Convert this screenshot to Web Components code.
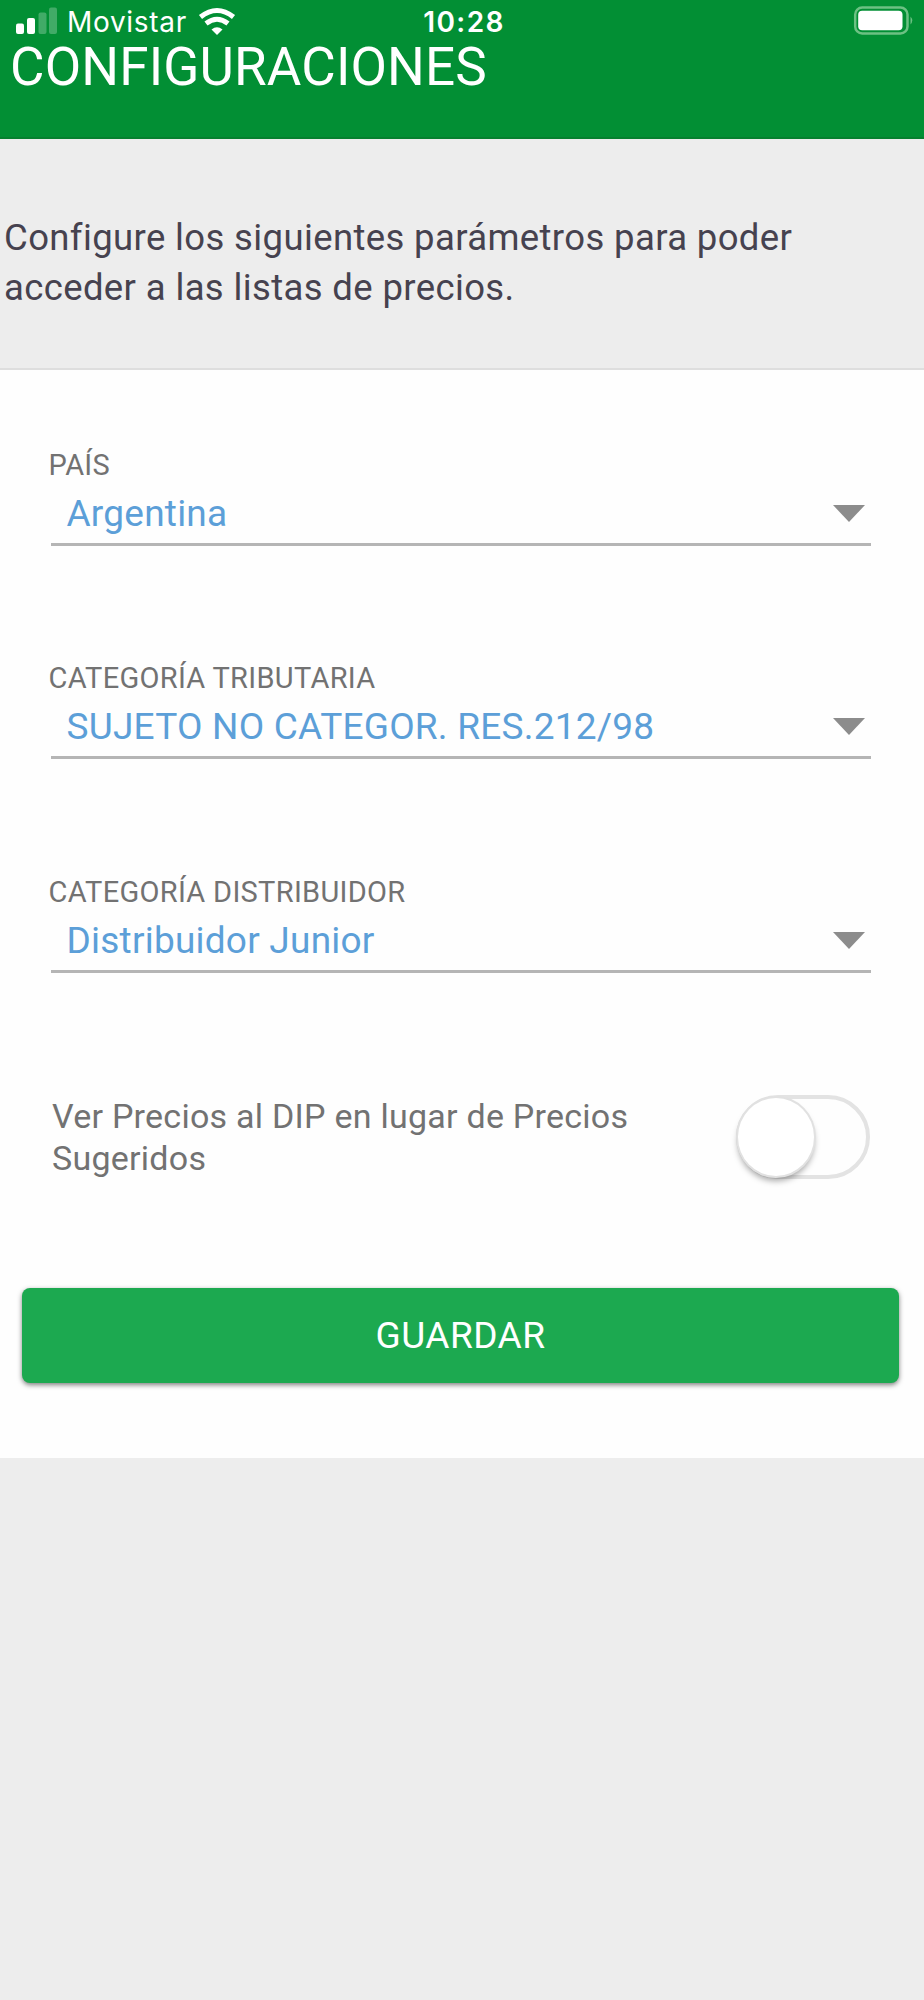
<!DOCTYPE html>
<html lang="es">
<head>
<meta charset="UTF-8">
<title>Configuraciones</title>
<style>
    html, body {
        margin: 0;
        background: #ededed;
    }

    body {
        font-family: Roboto, "Liberation Sans", sans-serif;
    }
</style>
</head>
<body>
<settings-page>
    <app-header slot="header" heading="CONFIGURACIONES">
        <status-bar carrier="Movistar" time="10:28"></status-bar>
    </app-header>
    <intro-text slot="intro">Configure los siguientes parámetros para poder<br>acceder a las listas de precios.</intro-text>
    <select-field label="PAÍS" value="Argentina"></select-field>
    <select-field label="CATEGORÍA TRIBUTARIA" value="SUJETO NO CATEGOR. RES.212/98"></select-field>
    <select-field label="CATEGORÍA DISTRIBUIDOR" value="Distribuidor Junior"></select-field>
    <toggle-field>Ver Precios al DIP en lugar de Precios Sugeridos</toggle-field>
    <save-button>GUARDAR</save-button>
</settings-page>

<script>
class SettingsPage extends HTMLElement {
    connectedCallback() {
        this.attachShadow({ mode: 'open' });
        this.shadowRoot.innerHTML = `
            <style>
                :host {
                    display: flex;
                    flex-direction: column;
                    width: 924px;
                    height: 2000px;
                    overflow: hidden;
                    background: #ededed;
                }

                main {
                    box-sizing: border-box;
                    height: 1088px;
                    padding-top: 72px;
                    background: #fefefe;
                }
            </style>

            <slot name="header"></slot>
            <slot name="intro"></slot>
            <main><slot></slot></main>
        `;
    }
}

class AppHeader extends HTMLElement {
    connectedCallback() {
        const heading = this.getAttribute('heading') || '';

        this.attachShadow({ mode: 'open' });
        this.shadowRoot.innerHTML = `
            <style>
                :host {
                    display: block;
                    box-sizing: border-box;
                    height: 139px;
                    background: #028f34;
                    border-bottom: 2px solid #06802f;
                }

                h1 {
                    margin: 0;
                    padding-left: 10px;
                    font-size: 53px;
                    font-weight: 400;
                    line-height: 62px;
                    letter-spacing: 0.15px;
                    white-space: nowrap;
                    color: #fff;
                }
            </style>

            <slot></slot>
            <h1>${heading}</h1>
        `;
    }
}

class StatusBar extends HTMLElement {
    connectedCallback() {
        const carrier = this.getAttribute('carrier') || '';
        const time = this.getAttribute('time') || '';

        this.attachShadow({ mode: 'open' });
        this.shadowRoot.innerHTML = `
            <style>
                :host {
                    display: grid;
                    grid-template-columns: 1fr auto 1fr;
                    height: 36px;
                    padding: 0 15px;
                    font-family: Inter, "Liberation Sans", sans-serif;
                    font-size: 28px;
                    line-height: 44px;
                    color: #fff;
                }

                .left {
                    display: flex;
                }

                .carrier {
                    margin: 0 11px 0 9px;
                    letter-spacing: 0.7px;
                }

                .time {
                    padding-left: 4px;
                    font-weight: 600;
                    letter-spacing: 1.4px;
                }

                .right {
                    display: flex;
                    justify-content: flex-end;
                    margin-right: -4px;
                }

                svg {
                    display: block;
                    flex: none;
                }
            </style>

            <div class="left">
                <svg width="43" height="36" viewBox="0 0 43 36" fill="#fff">
                    <rect x="1" y="23.5" width="8" height="10.5" rx="2"/>
                    <rect x="12" y="18" width="8" height="16" rx="2"/>
                    <rect x="23.5" y="12.5" width="8" height="21.5" rx="2" opacity=".25"/>
                    <rect x="34" y="7.5" width="8" height="26.5" rx="2" opacity=".25"/>
                </svg>
                <span class="carrier">${carrier}</span>
                <svg width="38" height="36" viewBox="0 0 38 36" fill="none" stroke="#fff" stroke-width="5">
                    <path d="M2.5 17Q19 4 35.5 17"/>
                    <path d="M8 23.5Q19 15 30 23.5"/>
                    <path d="M13.5 29.5Q19 25 24.5 29.5L19 35Z" fill="#fff" stroke="none"/>
                </svg>
            </div>
            <span class="time">${time}</span>
            <div class="right">
                <svg width="64" height="36" viewBox="0 0 64 36">
                    <rect x="6.2" y="7.5" width="52.3" height="26" rx="7" fill="none" stroke="#6cc183" stroke-width="2.5"/>
                    <rect x="9.2" y="10.8" width="44.3" height="19.4" rx="4" fill="#fff"/>
                    <path d="M61.5 16.5Q65 20.5 61.5 24.5Z" fill="#6cc183"/>
                </svg>
            </div>
        `;
    }
}

class IntroText extends HTMLElement {
    connectedCallback() {
        this.attachShadow({ mode: 'open' });
        this.shadowRoot.innerHTML = `
            <style>
                :host {
                    display: block;
                    box-sizing: border-box;
                    height: 231px;
                    padding: 74px 0 0 4px;
                    border-bottom: 2px solid #dedede;
                    font-size: 36.5px;
                    line-height: 50px;
                    letter-spacing: 0.37px;
                    white-space: nowrap;
                    color: #46424f;
                }
            </style>

            <slot></slot>
        `;
    }
}

class SelectField extends HTMLElement {
    connectedCallback() {
        const label = this.getAttribute('label') || '';
        const value = this.getAttribute('value') || '';

        this.attachShadow({ mode: 'open' });
        this.shadowRoot.innerHTML = `
            <style>
                :host {
                    display: block;
                    height: 213.4px;
                    padding: 0 53px 0 48.5px;
                    white-space: nowrap;
                }

                .label {
                    box-sizing: border-box;
                    height: 44px;
                    padding-top: 1px;
                    font-size: 29px;
                    line-height: 44px;
                    letter-spacing: 0.3px;
                    color: #727272;
                }

                .control {
                    display: flex;
                    box-sizing: border-box;
                    height: 60px;
                    margin-left: 2.5px;
                    padding: 0 6px 0 15.5px;
                    border-bottom: 3px solid #b5b5b5;
                    font-size: 37px;
                    line-height: 56px;
                    letter-spacing: 0.23px;
                    color: #5c9fd8;
                }

                .value {
                    flex: 1;
                }

                svg {
                    margin-top: 19px;
                }
            </style>

            <div class="label">${label}</div>
            <div class="control">
                <span class="value">${value}</span>
                <svg width="32" height="17" viewBox="0 0 32 17"><path d="M0 0H32L16 17Z" fill="#8c8c8c"/></svg>
            </div>
        `;
    }
}

class ToggleField extends HTMLElement {
    connectedCallback() {
        this.attachShadow({ mode: 'open' });
        this.shadowRoot.innerHTML = `
            <style>
                :host {
                    display: flex;
                    justify-content: space-between;
                    box-sizing: border-box;
                    height: 206px;
                    padding: 13px 54px 0 52px;
                    font-size: 34px;
                    line-height: 42px;
                    letter-spacing: 0.25px;
                    color: #727272;
                }

                .text {
                    width: 600px;
                }

                .track {
                    box-sizing: border-box;
                    width: 134px;
                    height: 84px;
                    border: 4px solid #e3e3e3;
                    border-radius: 42px;
                }

                .knob {
                    box-sizing: border-box;
                    width: 76px;
                    height: 78px;
                    margin: -1px 0 0 -2px;
                    border-radius: 50%;
                    background: #fff;
                    box-shadow: 0 0 0 2px #e1e1e1, 0 5px 6px rgba(0, 0, 0, 0.35);
                }
            </style>

            <span class="text"><slot></slot></span>
            <div class="track"><div class="knob"></div></div>
        `;
    }
}

class SaveButton extends HTMLElement {
    connectedCallback() {
        this.attachShadow({ mode: 'open' });
        this.shadowRoot.innerHTML = `
            <style>
                :host {
                    display: block;
                    padding: 0 25px 0 22px;
                }

                button {
                    display: block;
                    width: 100%;
                    height: 95px;
                    padding: 0;
                    border: 0;
                    border-radius: 8px;
                    background: #1ca950;
                    box-shadow: 0 2px 5px rgba(0, 0, 0, 0.5);
                    font: inherit;
                    font-size: 37px;
                    letter-spacing: 0.5px;
                    color: #fff;
                }
            </style>

            <button type="button"><slot></slot></button>
        `;
    }
}

customElements.define('settings-page', SettingsPage);
customElements.define('app-header', AppHeader);
customElements.define('status-bar', StatusBar);
customElements.define('intro-text', IntroText);
customElements.define('select-field', SelectField);
customElements.define('toggle-field', ToggleField);
customElements.define('save-button', SaveButton);
</script>
</body>
</html>
